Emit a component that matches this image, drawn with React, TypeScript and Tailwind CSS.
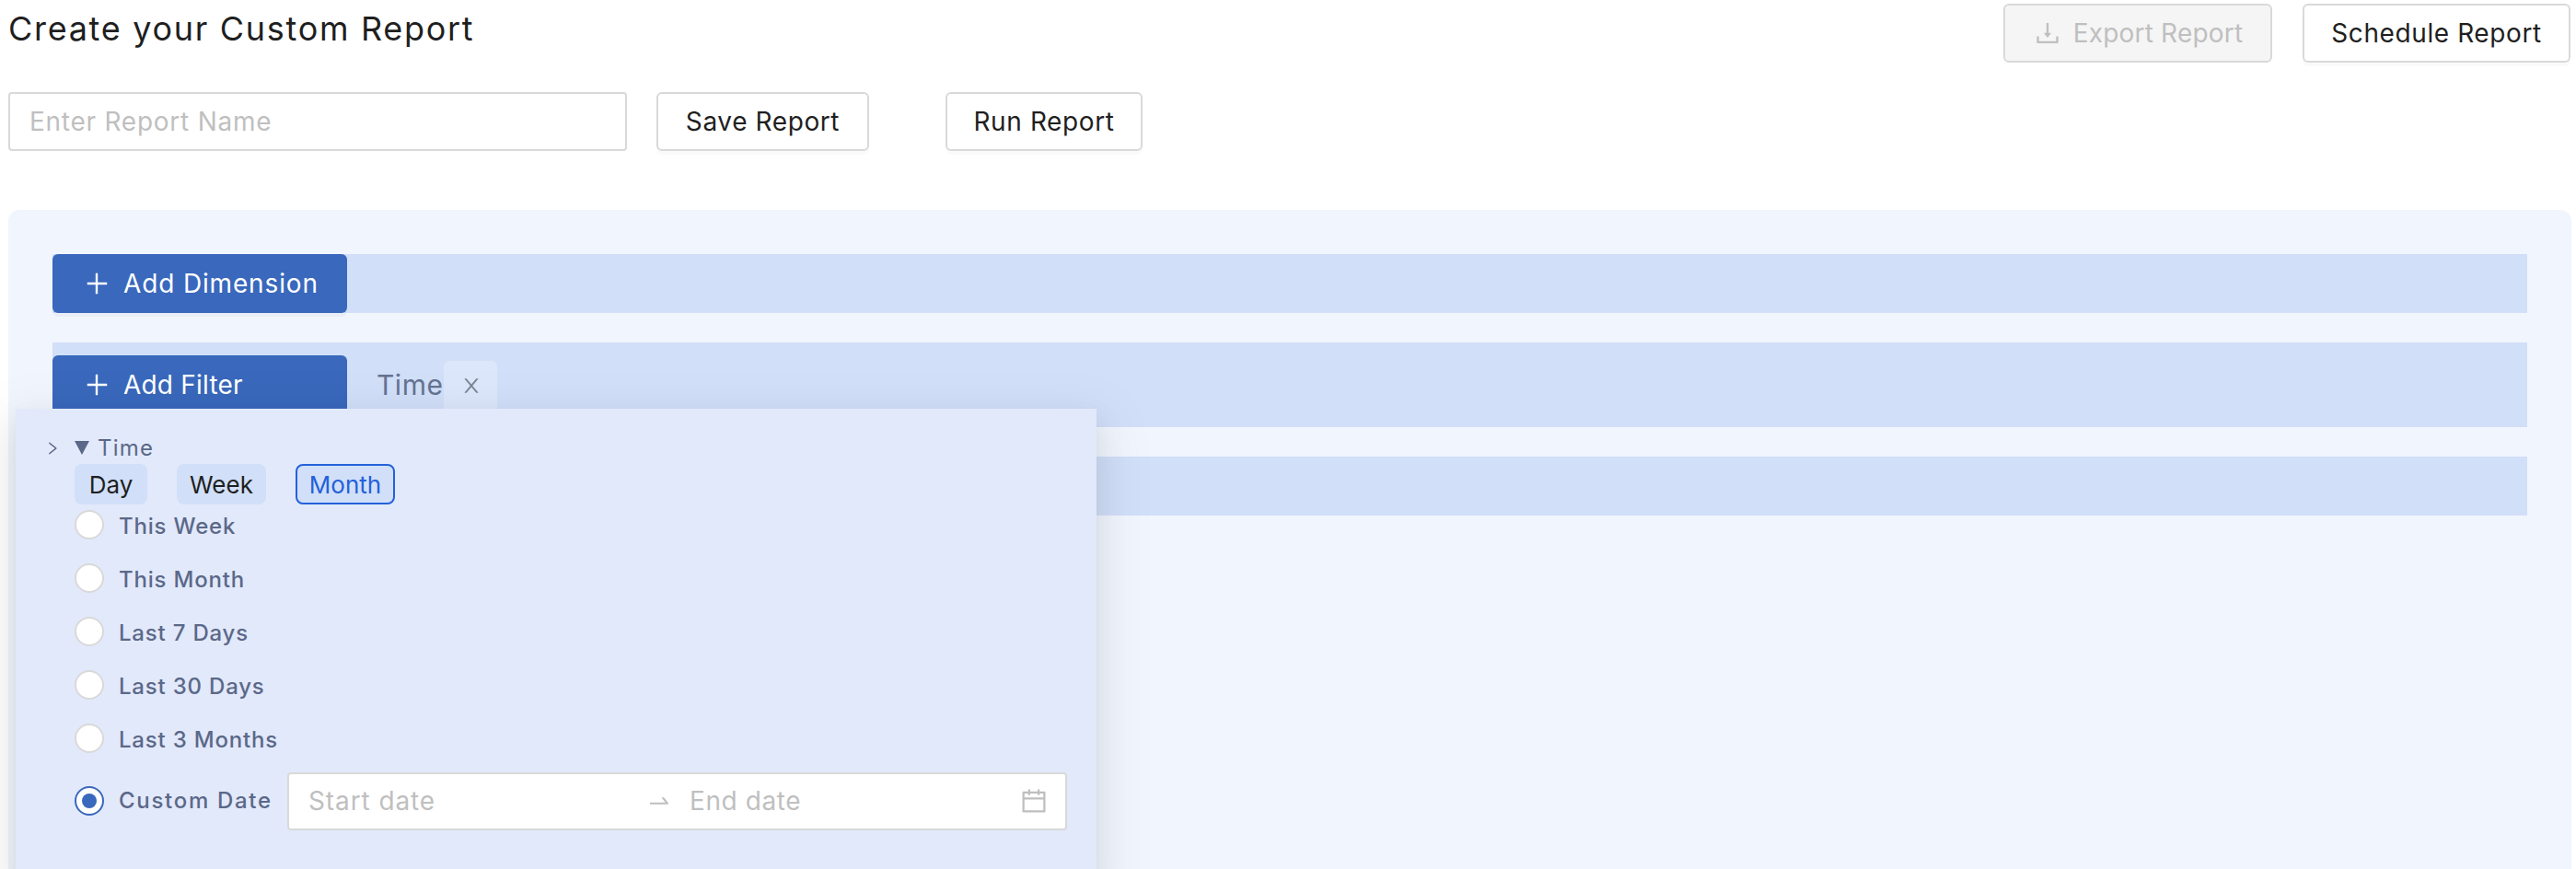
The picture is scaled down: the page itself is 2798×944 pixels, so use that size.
import React from "react";

const PLUS = "M482 152h60q8 0 8 8v704q0 8-8 8h-60q-8 0-8-8V160q0-8 8-8zM192 474h672q8 0 8 8v60q0 8-8 8H192q-8 0-8-8v-60q0-8 8-8z";
const DOWNLOAD = "M505.7 661a8 8 0 0012.6 0l112-141.7c4.1-5.2.4-12.9-6.3-12.9h-74.1V168c0-4.4-3.6-8-8-8h-60c-4.4 0-8 3.6-8 8v338.3H400c-6.7 0-10.4 7.7-6.3 12.9l112 141.8zM878 626h-60c-4.4 0-8 3.6-8 8v154H214V634c0-4.4-3.6-8-8-8h-60c-4.4 0-8 3.6-8 8v198c0 17.7 14.3 32 32 32h684c17.7 0 32-14.3 32-32V634c0-4.4-3.6-8-8-8z";
const CLOSE = "M563.8 512l262.5-312.9c4.4-5.2.7-13.1-6.1-13.1h-79.8c-4.7 0-9.2 2.1-12.3 5.7L511.6 449.8 295.1 191.7c-3-3.6-7.5-5.7-12.3-5.7H203c-6.8 0-10.5 7.9-6.1 13.1L459.4 512 196.9 824.9A7.95 7.95 0 00203 838h79.8c4.7 0 9.2-2.1 12.3-5.7l216.5-258.1 216.5 258.1c3 3.6 7.5 5.7 12.3 5.7h79.8c6.8 0 10.5-7.9 6.1-13.1L563.8 512z";
const SWAP = "M873.1 596.2l-164-208A32 32 0 00684 376h-64.8c-6.7 0-10.4 7.7-6.3 13l144.3 183H152c-4.4 0-8 3.6-8 8v60c0 4.4 3.6 8 8 8h695.9c26.8 0 41.7-30.8 25.2-51.8z";
const CALENDAR = "M880 184H712v-64c0-4.4-3.6-8-8-8h-56c-4.4 0-8 3.6-8 8v64H384v-64c0-4.4-3.6-8-8-8h-56c-4.4 0-8 3.6-8 8v64H144c-17.7 0-32 14.3-32 32v664c0 17.7 14.3 32 32 32h736c17.7 0 32-14.3 32-32V216c0-17.7-14.3-32-32-32zm-40 656H184V460h656v380zM184 392V256h128v48c0 4.4 3.6 8 8 8h56c4.4 0 8-3.6 8-8v-48h256v48c0 4.4 3.6 8 8 8h56c4.4 0 8-3.6 8-8v-48h128v136H184z";
const RIGHT = "M765.7 486.8L314.9 134.7A7.97 7.97 0 00302 141v77.3c0 4.9 2.3 9.6 6.1 12.6l360 281.1-360 281.1c-3.9 3-6.1 7.7-6.1 12.6V883c0 6.7 7.7 10.4 12.9 6.3l450.8-352.1a31.96 31.96 0 000-39.4z";

function Icon({ d, className }: { d: string; className: string }) {
  return (
    <svg viewBox="0 0 1024 1024" fill="currentColor" className={className}>
      <path d={d} />
    </svg>
  );
}

function AddButton({ label, tracking }: { label: string; tracking: string }) {
  return (
    <button className={`flex h-[64px] w-[320px] shrink-0 items-center gap-[13px] rounded-[6px] bg-[#3968bc] pl-[32px] text-[28px] text-white shadow-[0_4px_0_rgba(0,0,0,0.03)] ${tracking}`}>
      <Icon d={PLUS} className="h-[32px] w-[32px]" />
      {label}
    </button>
  );
}

function OutlineButton({ label, className }: { label: string; className: string }) {
  return (
    <button className={`h-[64px] rounded-[6px] border-2 border-[#d9d9d9] bg-white text-[28px] tracking-[0.6px] text-[#1f1f1f] shadow-[0_4px_0_rgba(0,0,0,0.02)] ${className}`}>
      {label}
    </button>
  );
}

function RadioRow({ label }: { label: string }) {
  return (
    <label className="flex h-[58px] items-start gap-[16px]">
      <span className="h-[32px] w-[32px] rounded-full border-2 border-[#d9d9d9] bg-white" />
      <span className="text-[24px] font-medium leading-[36px] tracking-[0.8px] text-[#5b6888]">{label}</span>
    </label>
  );
}

function TimePopup() {
  return (
    <div className="absolute left-[17px] top-[444px] h-[520px] w-[1174px] bg-[#e2e9fb] pl-[35px] pt-[27px] shadow-[0_12px_32px_0_rgba(0,0,0,0.08),0_6px_12px_-8px_rgba(0,0,0,0.12),0_18px_56px_16px_rgba(0,0,0,0.05)]">
      <div className="mb-[2px] flex h-[31px] items-center text-[#5b6888]">
        <Icon d={RIGHT} className="h-[18px] w-[18px] -translate-x-[4px]" />
        <svg viewBox="0 0 16 15" fill="currentColor" className="ml-[11px] h-[15px] w-[16px]">
          <polygon points="0,0 16,0 8,15" />
        </svg>
        <span className="ml-[9px] text-[24px] tracking-[1.2px]">Time</span>
      </div>
      <div className="ml-[29px] flex h-[44px] gap-[32px] text-[26px]">
        <span className="flex w-[79px] items-center justify-center rounded-[8px] bg-[#d1dff8] text-[#1f1f1f]">Day</span>
        <span className="flex w-[97px] items-center justify-center rounded-[8px] bg-[#d1dff8] text-[#1f1f1f]">Week</span>
        <span className="flex w-[108px] items-center justify-center rounded-[8px] border-2 border-[#2461d9] bg-[#d1dff8] text-[#2461d9]">Month</span>
      </div>
      <div className="ml-[29px] mt-[6px] flex flex-col">
        <RadioRow label="This Week" />
        <RadioRow label="This Month" />
        <RadioRow label="Last 7 Days" />
        <RadioRow label="Last 30 Days" />
        <RadioRow label="Last 3 Months" />
        <div className="-mt-[6px] flex h-[64px] items-center">
          <span className="flex h-[32px] w-[32px] items-center justify-center rounded-full border-2 border-[#3968bc] bg-white">
            <span className="h-[16px] w-[16px] rounded-full bg-[#3968bc]" />
          </span>
          <span className="ml-[16px] w-[183px] text-[24px] font-medium tracking-[1.7px] text-[#5b6888]">Custom Date</span>
          <div className="flex h-[63px] w-[847px] items-center rounded-[4px] border-2 border-[#d9d9d9] bg-white pl-[21px] pr-[18px] text-[28px]">
            <input placeholder="Start date" className="w-[367px] bg-transparent tracking-[0.9px] outline-none placeholder:text-[#bfbfbf]" />
            <Icon d={SWAP} className="h-[28px] w-[28px] text-[#bfbfbf]" />
            <input placeholder="End date" className="ml-[19px] w-[340px] bg-transparent tracking-[0.6px] outline-none placeholder:text-[#bfbfbf]" />
            <Icon d={CALENDAR} className="ml-auto h-[32px] w-[32px] text-[#bfbfbf]" />
          </div>
        </div>
      </div>
    </div>
  );
}

export default function App() {
  return (
    <div className="relative h-[944px] overflow-hidden bg-white pl-[9px] pr-[5px] font-[Inter,sans-serif]">
      <div className="flex items-start justify-between pr-[1px]">
        <div>
          <h1 className="pt-[9px] text-[36px] leading-[44px] tracking-[1.7px] text-[#1f1f1f]">Create your Custom Report</h1>
          <div className="mt-[47px] flex">
            <input
              placeholder="Enter Report Name"
              className="h-[64px] w-[672px] rounded-[4px] border-2 border-[#d9d9d9] bg-white pl-[21px] text-[28px] tracking-[0.75px] outline-none placeholder:text-[#bfbfbf]"
            />
            <OutlineButton label="Save Report" className="ml-[32px] w-[231px]" />
            <OutlineButton label="Run Report" className="ml-[83px] w-[214px]" />
          </div>
        </div>
        <div className="flex gap-[33px] pt-[4px]">
          <button className="flex h-[64px] w-[292px] items-center justify-center gap-[12px] rounded-[6px] border-2 border-[#d9d9d9] bg-[#f5f5f5] text-[28px] tracking-[0.2px] text-[#bfbfbf]">
            <Icon d={DOWNLOAD} className="h-[32px] w-[32px]" />
            Export Report
          </button>
          <OutlineButton label="Schedule Report" className="w-[291px]" />
        </div>
      </div>

      <div className="mt-[64px] h-[717px] rounded-t-[12px] bg-[#f1f5fe] px-[48px] pt-[48px]">
        <div className="h-[64px] bg-[#d1dff8]">
          <AddButton label="Add Dimension" tracking="tracking-[0.85px]" />
        </div>
        <div className="mt-[32px] flex h-[92px] items-center bg-[#d1dff8]">
          <AddButton label="Add Filter" tracking="tracking-[0.2px]" />
          <span className="ml-[32px] text-[30px] tracking-[0.5px] text-[#667391]">Time</span>
          <span className="ml-[1px] flex h-[60px] w-[58px] translate-y-[4px] items-center justify-center rounded-[6px] bg-[#dde7fb] text-[#7c8493]">
            <Icon d={CLOSE} className="h-[24px] w-[24px] translate-x-[1px] -translate-y-[3px]" />
          </span>
        </div>
        <div className="mt-[32px] h-[64px] bg-[#d1dff8]" />
      </div>

      <TimePopup />
    </div>
  );
}
